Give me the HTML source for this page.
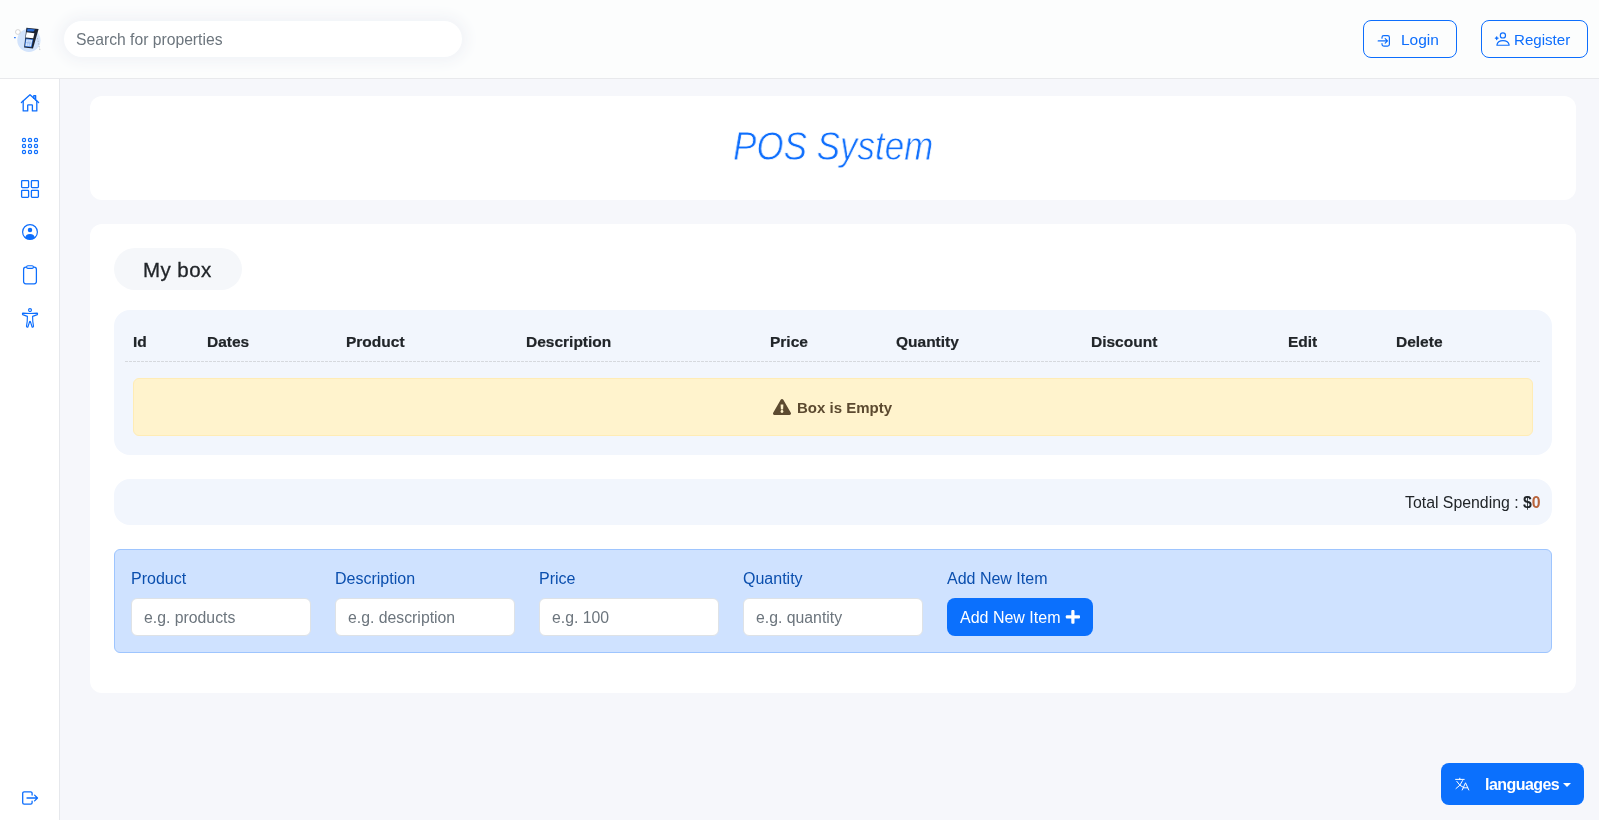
<!DOCTYPE html>
<html><head><meta charset="utf-8">
<style>
*{box-sizing:border-box;margin:0;padding:0}
html,body{width:1599px;height:820px;overflow:hidden}
body{background:#f6f7fb;font-family:"Liberation Sans",sans-serif;color:#212529;position:relative}
.abs{position:absolute}
.t{position:absolute;white-space:nowrap;line-height:1;will-change:transform}
#header{left:0;top:0;width:1599px;height:79px;background:#fcfdfd;border-bottom:1px solid #e8e9ec}
#side{left:0;top:79px;width:60px;height:741px;background:#fff;border-right:1px solid #e6e8ec}
#search{left:64px;top:21px;width:398px;height:36px;background:#fff;border-radius:18px;box-shadow:0 0 14px 5px #f1f3f7}
.obtn{border:1px solid #0d6efd;border-radius:8px;height:38px;top:20px;background:transparent}
.card{background:#fff;border-radius:12px}
.hd{font-weight:bold;font-size:15.5px;color:#212529;-webkit-text-stroke:0.2px #212529}
.lbl{font-size:16px;color:#0b4fae}
.inp{top:598px;width:180px;height:38px;background:#fff;border:1px solid #dee2e6;border-radius:6px}
.ph{font-size:15.8px;color:#6c757d}
</style></head><body>

<div id="header" class="abs"></div>
<div id="side" class="abs"></div>

<!-- logo -->
<svg class="abs" style="left:10px;top:22px" width="36" height="34" viewBox="10 22 36 34">
  <circle cx="28.9" cy="40.3" r="11.6" fill="#d3e4fc"/>
  <circle cx="17.9" cy="32" r="2.4" fill="#fff" stroke="#c4c4c4" stroke-width="0.7"/>
  <path d="M14 37.6 H15.8" stroke="#3b82f6" stroke-width="1.1"/>
  <path d="M37.5 38 L40 50.5" stroke="#9aa0a6" stroke-width="0.6" stroke-dasharray="1.5 1.2"/>
  <path d="M26.4 27.8 L38.6 29.1 L33 48.6 L24.1 47.5 Z" fill="#1c2433"/>
  <path d="M27.5 28.6 L35 29.5 L33.5 31.6 L27 31.2 Z" fill="#2d6fd8"/>
  <path d="M26.6 32.3 L34.4 33.3 L33.2 38.2 L25.7 37.4 Z" fill="#fff"/>
  <path d="M25.7 38.4 L33.1 39.3 L31.6 47.3 L24.7 46.6 Z" fill="#2f74e0"/>
  <path d="M26.3 39.3 L32.4 40 L31 46.5 L25.4 45.9 Z" fill="#d6e5fb"/>
  <path d="M28.3 40.3 L27.6 45.6 M30.2 40.5 L29.4 45.8 M26.1 42.6 L31.5 43.2" stroke="#6f9fe8" stroke-width="0.45"/>
</svg>

<div id="search" class="abs"></div>
<div class="t" style="left:76px;top:31.7px;font-size:15.7px;color:#6c757d">Search for properties</div>

<!-- Login -->
<div class="abs obtn" style="left:1363px;width:94px"></div>
<svg class="abs" style="left:1370px;top:26px" width="30" height="26" viewBox="1370 26 30 26" fill="none" stroke="#0d6efd" stroke-width="1.2" stroke-linecap="round" stroke-linejoin="round">
  <path d="M1382 38.2 V37.4 a1.8 1.8 0 0 1 1.8 -1.8 H1387.6 a1.8 1.8 0 0 1 1.8 1.8 V44.3 a1.8 1.8 0 0 1 -1.8 1.8 H1383.8 a1.8 1.8 0 0 1 -1.8 -1.8 V43.6"/>
  <path d="M1378.2 40.9 H1387.3 M1385.2 38.6 L1387.5 40.9 L1385.2 43.2"/>
</svg>
<div class="t" style="left:1400.5px;top:32.3px;font-size:15.5px;color:#0d6efd">Login</div>

<!-- Register -->
<div class="abs obtn" style="left:1481px;width:107px"></div>
<svg class="abs" style="left:1488px;top:26px" width="30" height="26" viewBox="1488 26 30 26" fill="none" stroke="#0d6efd" stroke-width="1.15" stroke-linecap="round" stroke-linejoin="round">
  <circle cx="1502.9" cy="35.4" r="2.6"/>
  <path d="M1496.9 45.2 Q1497.6 40.6 1503 40.6 Q1508.4 40.6 1509.2 45.2 Z"/>
  <path d="M1496.7 36.9 V39.5 M1495.4 38.2 H1498" stroke-width="1.3"/>
</svg>
<div class="t" style="left:1513.6px;top:31.6px;font-size:15.1px;color:#0d6efd">Register</div>

<!-- sidebar icons -->
<svg class="abs" style="left:0;top:79px" width="60" height="741" viewBox="0 79 60 741" fill="none" stroke="#0d6efd" stroke-width="1.3" stroke-linecap="round" stroke-linejoin="round">
  <!-- house -->
  <path d="M21.4 102.6 L30 94.8 L38.6 102.6"/>
  <path d="M23.2 101 V110.9 H27.7 V105.2 Q27.7 104.8 28.2 104.8 H31.9 Q32.4 104.8 32.4 105.2 V110.9 H36.8 V101"/>
  <path d="M33.8 98.2 V95.6 H35.6 V100" stroke-width="1.4"/>
  <!-- dots -->
  <g stroke-width="1.2">
    <circle cx="24" cy="140" r="1.6"/><circle cx="30" cy="140" r="1.6"/><circle cx="36" cy="140" r="1.6"/>
    <circle cx="24" cy="146" r="1.6"/><circle cx="30" cy="146" r="1.6"/><circle cx="36" cy="146" r="1.6"/>
    <circle cx="24" cy="152" r="1.6"/><circle cx="30" cy="152" r="1.6"/><circle cx="36" cy="152" r="1.6"/>
  </g>
  <!-- grid -->
  <rect x="21.6" y="180.6" width="7" height="7" rx="0.8"/>
  <rect x="31.4" y="180.6" width="7" height="7" rx="0.8"/>
  <rect x="21.6" y="190.4" width="7" height="7" rx="0.8"/>
  <rect x="31.4" y="190.4" width="7" height="7" rx="0.8"/>
  <!-- person circle -->
  <circle cx="30" cy="232" r="7.4" stroke-width="1.2"/>
  <circle cx="30" cy="229.9" r="2.25" fill="#0d6efd" stroke="none"/>
  <path d="M25.2 238.2 Q25.5 234 30 234 Q34.5 234 34.8 238.2 Q32.6 239.6 30 239.6 Q27.4 239.6 25.3 238.2 Z" fill="#0d6efd" stroke="none"/>
  <!-- clipboard -->
  <rect x="23.6" y="267.2" width="12.8" height="16.6" rx="2.2" stroke-width="1.25"/>
  <rect x="26.6" y="265.8" width="6.8" height="2.6" rx="1.3" fill="#fff" stroke-width="1.1"/>
  <!-- universal access -->
  <g stroke-width="1.15">
    <circle cx="30" cy="310.1" r="1.45"/>
    <path d="M23 313.1 Q30 313.9 37 313.1 Q37.9 313.4 37.4 314.6 L32.6 316.4 L32.8 321.5 L33.5 326.2 Q33.3 327.5 32.1 327 L30.4 321.6 Q30 321 29.6 321.6 L27.9 327 Q26.7 327.5 26.5 326.2 L27.2 321.5 L27.4 316.4 L22.6 314.6 Q22.1 313.4 23 313.1 Z"/>
  </g>
  <!-- exit -->
  <path d="M32.1 795 V793.2 a1.4 1.4 0 0 0 -1.4 -1.4 H24.1 a1.4 1.4 0 0 0 -1.4 1.4 V802.8 a1.4 1.4 0 0 0 1.4 1.4 H30.7 a1.4 1.4 0 0 0 1.4 -1.4 V801.2"/>
  <path d="M27 798 H37.4 M34.6 795.1 L37.5 798 L34.6 800.9"/>
</svg>
<!-- card 1 -->
<div class="abs card" style="left:90px;top:96px;width:1486px;height:104px"></div>
<div class="t" style="left:733px;top:125.5px;font-size:40.5px;font-style:italic;color:#0d6efd;-webkit-text-stroke:0.8px #fff;transform:scaleX(0.864);transform-origin:0 0">POS System</div>

<!-- card 2 -->
<div class="abs card" style="left:90px;top:224px;width:1486px;height:469px"></div>
<div class="abs" style="left:114px;top:248px;width:128px;height:42px;border-radius:21px;background:#f5f7fa"></div>
<div class="t" style="left:143.2px;top:259.9px;font-size:20.5px;letter-spacing:0.45px;-webkit-text-stroke:0.3px #212529;color:#212529">My box</div>

<div class="abs" style="left:114px;top:310px;width:1438px;height:145px;border-radius:16px;background:#f2f6fd"></div>
<div class="t hd" style="left:133px;top:333.5px">Id</div>
<div class="t hd" style="left:207px;top:333.5px">Dates</div>
<div class="t hd" style="left:346px;top:333.5px">Product</div>
<div class="t hd" style="left:526px;top:333.5px">Description</div>
<div class="t hd" style="left:770px;top:333.5px">Price</div>
<div class="t hd" style="left:896px;top:333.5px">Quantity</div>
<div class="t hd" style="left:1091px;top:333.5px">Discount</div>
<div class="t hd" style="left:1288px;top:333.5px">Edit</div>
<div class="t hd" style="left:1396px;top:333.5px">Delete</div>
<div class="abs" style="left:125px;top:361px;width:1416px;height:1px;background:repeating-linear-gradient(to right,#d6d9de 0 3px,transparent 3px 4px)"></div>

<div class="abs" style="left:133px;top:378px;width:1400px;height:58px;background:#fff3cd;border:1px solid #ffecb5;border-radius:6px"></div>
<svg class="abs" style="left:773px;top:399px" width="18" height="16" viewBox="0 0 576 512" fill="#5c4a30">
  <path d="M569.5 440C588 472 564.8 512 527.9 512H48.1c-36.9 0-60-40.1-41.6-72L246.4 24c18.5-32 64.7-32 83.2 0l239.9 416zM288 354c-25.4 0-46 20.6-46 46s20.6 46 46 46 46-20.6 46-46-20.6-46-46-46zm-43.7-165.3l7.4 136c.3 6.4 5.6 11.3 12 11.3h48.5c6.4 0 11.6-5 12-11.3l7.4-136c.4-6.9-5.1-12.7-12-12.7h-63.4c-6.9 0-12.4 5.8-12 12.7z"/>
</svg>
<div class="t" style="left:797px;top:400.1px;font-weight:bold;font-size:15px;color:#5c4a30">Box is Empty</div>

<div class="abs" style="left:114px;top:479px;width:1438px;height:46px;border-radius:16px;background:#f2f6fd"></div>
<div class="t" style="left:1404.8px;top:494.7px;font-size:15.85px;color:#212529">Total Spending : <b>$</b><b style="color:#b8633b">0</b></div>

<!-- form -->
<div class="abs" style="left:114px;top:549px;width:1438px;height:104px;background:#cfe2ff;border:1px solid #9ec5fe;border-radius:6px"></div>
<div class="t lbl" style="left:131px;top:570.9px">Product</div>
<div class="t lbl" style="left:335px;top:570.9px">Description</div>
<div class="t lbl" style="left:539px;top:570.9px">Price</div>
<div class="t lbl" style="left:743px;top:570.9px">Quantity</div>
<div class="t lbl" style="left:947px;top:570.9px">Add New Item</div>
<div class="abs inp" style="left:131px"></div>
<div class="abs inp" style="left:335px"></div>
<div class="abs inp" style="left:539px"></div>
<div class="abs inp" style="left:743px"></div>
<div class="t ph" style="left:144px;top:609.8px">e.g. products</div>
<div class="t ph" style="left:348px;top:609.8px">e.g. description</div>
<div class="t ph" style="left:552px;top:609.8px">e.g. 100</div>
<div class="t ph" style="left:756px;top:609.8px">e.g. quantity</div>
<div class="abs" style="left:947px;top:598px;width:146px;height:38px;background:#0b70fd;border-radius:8px"></div>
<div class="t" style="left:960px;top:609.5px;font-size:16px;color:#fff">Add New Item</div>
<svg class="abs" style="left:1064px;top:608px" width="18" height="18" viewBox="1064 608 18 18" fill="#fff">
  <rect x="1065.8" y="615.3" width="14.2" height="3.2" rx="1"/>
  <rect x="1071.3" y="610.1" width="3.2" height="13.6" rx="1"/>
</svg>

<!-- languages -->
<div class="abs" style="left:1441px;top:763px;width:143px;height:42px;background:#0b70fd;border-radius:8px"></div>
<svg class="abs" style="left:1450px;top:772px" width="24" height="24" viewBox="1450 772 24 24" fill="none" stroke="#fff" stroke-width="1" stroke-linecap="round" stroke-linejoin="round">
  <path d="M1455.6 779.4 H1464.2 M1459.8 778.2 V779.4 M1456.8 781.4 Q1460 786.5 1463 787.2 M1462.6 780.6 Q1460.5 786 1456 788.6"/>
  <path d="M1462.2 790 L1465.5 782.8 L1468.8 790 M1463.3 787.8 H1467.7"/>
</svg>
<div class="t" style="left:1484.5px;top:777.2px;font-weight:bold;font-size:16px;letter-spacing:-0.55px;color:#fff">languages</div>
<div class="abs" style="left:1563px;top:783px;width:0;height:0;border-left:4px solid transparent;border-right:4px solid transparent;border-top:4.5px solid #fff"></div>

</body></html>
